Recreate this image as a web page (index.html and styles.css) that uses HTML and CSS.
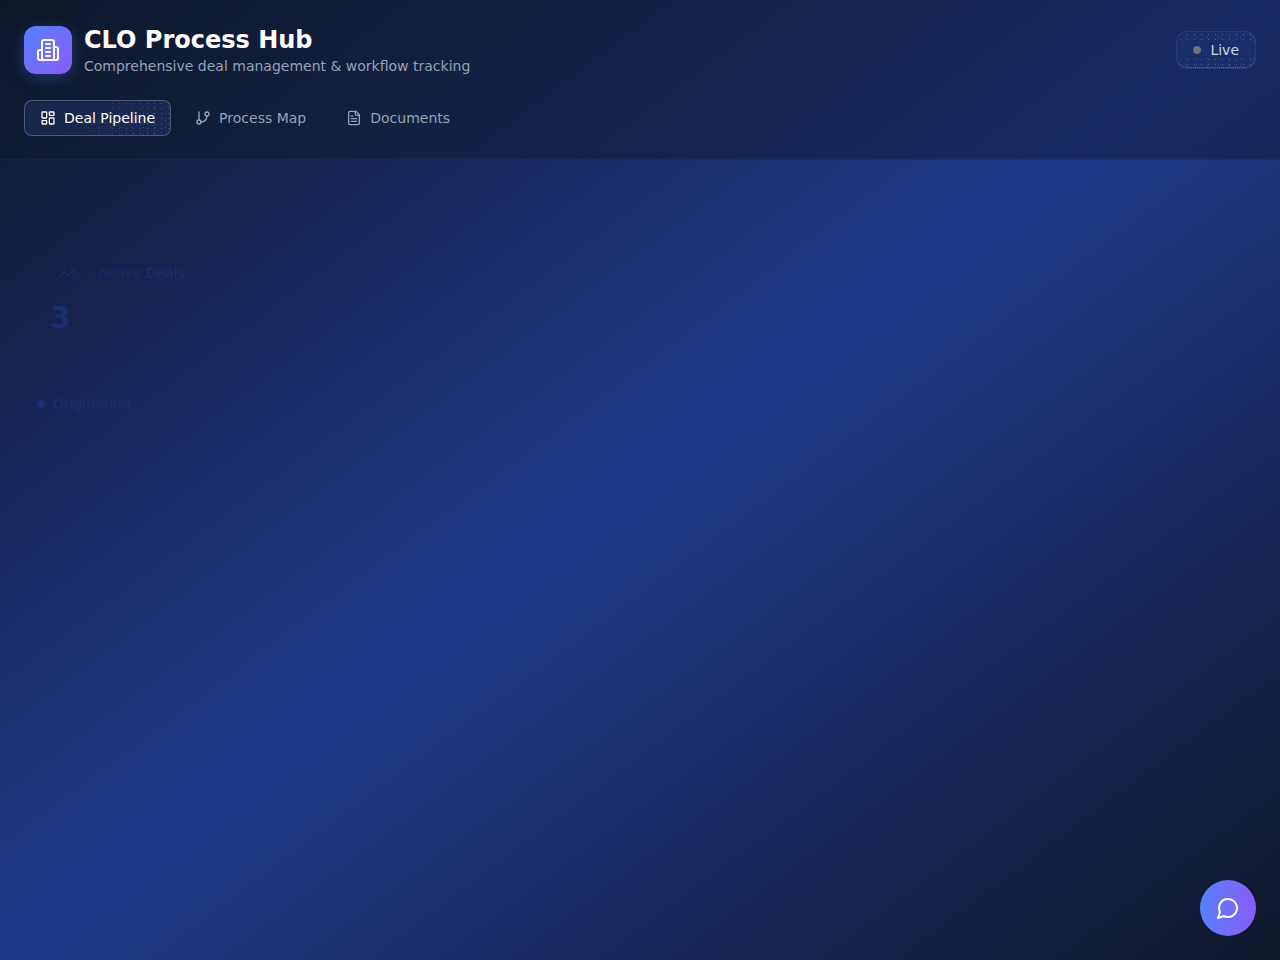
FILE: index.html
```html
<!DOCTYPE html>
<html lang="en">
<head>
    <meta charset="UTF-8">
    <meta name="viewport" content="width=device-width, initial-scale=1.0">
    <title>CLO Process Hub</title>
    <link rel="stylesheet" href="styles.css">
</head>
<body>
    <header class="app-header">
        <div class="header-top">
            <div class="brand">
                <div class="brand-logo">
                    <svg class="icon-logo" viewBox="0 0 24 24">
                        <path d="M6 22V4a2 2 0 0 1 2-2h8a2 2 0 0 1 2 2v18Z"/>
                        <path d="M6 12H4a2 2 0 0 0-2 2v6a2 2 0 0 0 2 2h2"/>
                        <path d="M18 9h2a2 2 0 0 1 2 2v9a2 2 0 0 1-2 2h-2"/>
                        <path d="M10 6h4"/>
                        <path d="M10 10h4"/>
                        <path d="M10 14h4"/>
                        <path d="M10 18h4"/>
                    </svg>
                </div>
                <div>
                    <h1 class="brand-title">CLO Process Hub</h1>
                    <p class="brand-sub">Comprehensive deal management &amp; workflow tracking</p>
                </div>
            </div>
            <div class="live-badge">
                <span class="live-dot"></span>
                <span>Live</span>
            </div>
        </div>
        <nav class="tabs">
            <button class="tab active">
                <svg class="icon-tab" viewBox="0 0 24 24">
                    <rect x="3" y="3" width="7" height="9" rx="1"/>
                    <rect x="14" y="3" width="7" height="5" rx="1"/>
                    <rect x="14" y="12" width="7" height="9" rx="1"/>
                    <rect x="3" y="16" width="7" height="5" rx="1"/>
                </svg>
                <span class="tab-text">Deal Pipeline</span>
            </button>
            <button class="tab">
                <svg class="icon-tab" viewBox="0 0 24 24">
                    <path d="M6 3v12"/>
                    <circle cx="18" cy="6" r="3"/>
                    <circle cx="6" cy="18" r="3"/>
                    <path d="M18 9a9 9 0 0 1-9 9"/>
                </svg>
                <span class="tab-text">Process Map</span>
            </button>
            <button class="tab">
                <svg class="icon-tab" viewBox="0 0 24 24">
                    <path d="M15 2H6a2 2 0 0 0-2 2v16a2 2 0 0 0 2 2h12a2 2 0 0 0 2-2V7Z"/>
                    <path d="M14 2v4a2 2 0 0 0 2 2h4"/>
                    <path d="M10 9H8"/>
                    <path d="M16 13H8"/>
                    <path d="M16 17H8"/>
                </svg>
                <span class="tab-text">Documents</span>
            </button>
        </nav>
    </header>

    <!-- content is still fading in on the reference -->
    <main class="content">
        <section class="stat">
            <div class="stat-label">
                <svg class="icon-stat" viewBox="0 0 24 24">
                    <path d="M22 7l-8.5 8.5-5-5L2 17"/>
                    <path d="M16 7h6v6"/>
                </svg>
                <span>Active <b>Deals</b></span>
            </div>
            <div class="stat-value">3</div>
        </section>
        <div class="stage-row">
            <span class="stage-dot"></span>
            <span>Origination</span>
        </div>
    </main>

    <button class="chat-fab">
        <svg class="icon-chat" viewBox="0 0 24 24">
            <path d="M7.9 20A9 9 0 1 0 4 16.1L2 22Z"/>
        </svg>
    </button>
</body>
</html>
```

FILE: styles.css
```css
* {
    box-sizing: border-box;
}
html, body {
    height: 100%;
}
body {
    margin: 0;
    font-family: 'DejaVu Sans', sans-serif;
    background: linear-gradient(to bottom right, #0f172a 0%, #1e3a8a 50%, #0f172a 100%);
    color: #fff;
    overflow: hidden;
}
svg {
    fill: none;
    stroke: currentColor;
    stroke-width: 2;
    stroke-linecap: round;
    stroke-linejoin: round;
    flex-shrink: 0;
}
.app-header {
    height: 160px;
    padding: 26px 24px 0;
    background: rgba(15, 23, 42, 0.42);
    border-bottom: 1px solid rgba(255, 255, 255, 0.03);
}
.header-top {
    display: flex;
    justify-content: space-between;
    align-items: flex-start;
    margin-bottom: 24px;
}
.brand {
    display: flex;
    align-items: flex-start;
    gap: 12px;
}
.brand-logo {
    width: 48px;
    height: 48px;
    border-radius: 12px;
    background: linear-gradient(135deg, #5580ff, #8b5cf6);
    box-shadow: 0 4px 14px rgba(59, 130, 246, 0.3);
    display: flex;
    align-items: center;
    justify-content: center;
}
.icon-logo {
    width: 24px;
    height: 24px;
}
.brand-title {
    margin: 0;
    font-size: 24px;
    line-height: 28px;
    font-weight: 700;
}
.brand-sub {
    margin: 2px 0 0;
    font-size: 14px;
    line-height: 20px;
    color: #94a3b8;
}
.live-badge {
    position: relative;
    display: flex;
    align-items: center;
    gap: 9px;
    height: 38px;
    margin-top: 5px;
    padding: 0 16px;
    border-radius: 10px;
    border: 1px solid rgba(255, 255, 255, 0.06);
    background: rgba(60, 90, 180, 0.1);
    font-size: 14px;
    color: #cbd5e1;
}
/* speckled glass grain over the badge and the active tab */
.live-badge::after,
.tab.active::after {
    content: "";
    position: absolute;
    inset: 0;
    border-radius: inherit;
    background-image:
        radial-gradient(circle, rgba(200, 210, 235, 0.3) 0.6px, transparent 0.9px),
        radial-gradient(circle, rgba(200, 210, 235, 0.22) 0.6px, transparent 0.9px);
    background-size: 7px 5px, 11px 7px;
    background-position: 0 0, 3px 2px;
    pointer-events: none;
}
.live-badge::after {
    -webkit-mask-image: linear-gradient(to bottom, #000 0, #000 25%, transparent 35%, transparent 65%, #000 75%);
    mask-image: linear-gradient(to bottom, #000 0, #000 25%, transparent 35%, transparent 65%, #000 75%);
    border-right: 1px dotted rgba(200, 210, 235, 0.4);
    border-bottom: 1px dotted rgba(200, 210, 235, 0.4);
}
.live-dot {
    width: 8px;
    height: 8px;
    border-radius: 50%;
    background: #6b7280;
}
.tabs {
    display: flex;
    gap: 8px;
}
.tab {
    position: relative;
    display: flex;
    align-items: center;
    gap: 8px;
    height: 36px;
    padding: 0 15px;
    border: 1px solid transparent;
    border-radius: 8px;
    background: none;
    font-family: inherit;
    font-size: 14px;
    color: #94a3b8;
}
.tab.active {
    color: #fff;
    background: rgba(59, 90, 180, 0.2);
    border-color: rgba(200, 210, 235, 0.3);
}
.tab.active::after {
    -webkit-mask-image: linear-gradient(115deg, transparent 30%, #000 85%);
    mask-image: linear-gradient(115deg, transparent 30%, #000 85%);
}
.tab-text {
    position: relative;
    z-index: 1;
}
.icon-tab {
    width: 16px;
    height: 16px;
}
.content {
    padding: 103px 24px 0;
    color: #172c66;
}
.stat {
    padding-left: 26px;
}
.stat-label {
    display: flex;
    align-items: center;
    gap: 22px;
    padding-left: 8px;
    height: 20px;
    font-size: 14px;
}
.stat-label b {
    font-weight: 400;
    color: #1a3070;
}
.icon-stat {
    width: 18px;
    height: 18px;
}
.stat-value {
    margin-top: 17px;
    font-size: 30px;
    line-height: 36px;
    font-weight: 700;
    color: #19306f;
}
.stage-row {
    display: flex;
    align-items: center;
    gap: 8px;
    margin-top: 58px;
    padding-left: 13px;
    height: 20px;
    font-size: 14px;
    color: #1a3070;
}
.stage-dot {
    width: 8px;
    height: 8px;
    border-radius: 50%;
    background: #1a3070;
}
.chat-fab {
    position: fixed;
    right: 24px;
    bottom: 24px;
    width: 56px;
    height: 56px;
    border: none;
    border-radius: 50%;
    background: linear-gradient(90deg, #5580ff, #8b5cf6);
    color: #fff;
    display: flex;
    align-items: center;
    justify-content: center;
}
.icon-chat {
    width: 24px;
    height: 24px;
}
```
